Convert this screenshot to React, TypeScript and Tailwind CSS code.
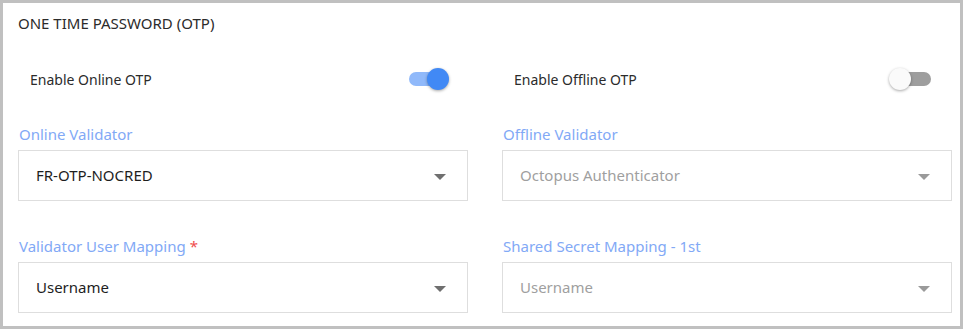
import React from 'react';

function Toggle({ on }: { on: boolean }) {
  return (
    <div className="relative w-[38px] h-[14px]">
      <div className={`absolute inset-0 rounded-full ${on ? 'bg-[#90b9fa]' : 'bg-[#9e9e9e]'}`} />
      <div
        className={`absolute top-[-4px] w-[22px] h-[22px] rounded-full shadow-[0_1px_3px_rgba(0,0,0,0.35)] ${
          on ? 'right-[-2px] bg-[#4189f5]' : 'left-[-4px] bg-[#fafafa]'
        }`}
      />
    </div>
  );
}

function ToggleRow({ label, on }: { label: string; on: boolean }) {
  return (
    <div className="flex items-center justify-between h-[40px] pl-[12px] pr-[21px]">
      <span className="text-[14px] text-[#2b2b2b]">{label}</span>
      <Toggle on={on} />
    </div>
  );
}

function Field({
  label,
  value,
  required,
  disabled,
}: {
  label: string;
  value: string;
  required?: boolean;
  disabled?: boolean;
}) {
  return (
    <div className="flex flex-col">
      <div className="h-[20px] leading-[20px] text-[15px] text-[#82a9f6] pl-px">
        {label}
        {required && <span className="text-[#ef4d4d] ml-[4px]">*</span>}
      </div>
      <div className="mt-[6px] h-[51px] border border-[#dedede] flex items-center justify-between pl-[17px] pr-[21px]">
        <span className={`text-[15px] ${disabled ? 'text-[#9f9f9f]' : 'text-[#1e1e1e]'}`}>{value}</span>
        <svg width="12" height="6" viewBox="0 0 12 6" className="mt-[2px]">
          <path d="M0 0 L12 0 L6 6 Z" fill={disabled ? '#9a9a9a' : '#6f6f6f'} />
        </svg>
      </div>
    </div>
  );
}

export default function App() {
  return (
    <div
      className="w-[963px] h-[329px] border-[3px] border-[#c0c0c0] bg-white pl-[15px] pr-[8px]"
      style={{ fontFamily: '"Noto Sans", "Open Sans", sans-serif' }}
    >
      <div className="pt-[10px] h-[30px] leading-[20px] text-[15px] text-[#2b2b2b]">
        ONE TIME PASSWORD (OTP)
      </div>
      <div className="grid grid-cols-2 gap-x-[34px] mt-[26px]">
        <ToggleRow label="Enable Online OTP" on={true} />
        <ToggleRow label="Enable Offline OTP" on={false} />
      </div>
      <div className="grid grid-cols-2 gap-x-[34px] mt-[25px]">
        <Field label="Online Validator" value="FR-OTP-NOCRED" />
        <Field label="Offline Validator" value="Octopus Authenticator" disabled />
      </div>
      <div className="grid grid-cols-2 gap-x-[34px] mt-[35px]">
        <Field label="Validator User Mapping" value="Username" required />
        <Field label="Shared Secret Mapping - 1st" value="Username" disabled />
      </div>
    </div>
  );
}
